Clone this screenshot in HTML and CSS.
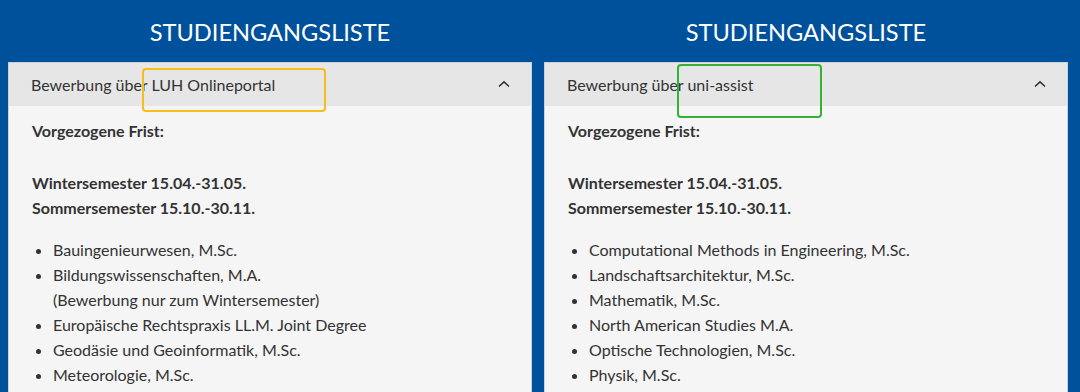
FILE: index.html
```html
<!DOCTYPE html>
<html lang="de">
  <head>
    <meta charset="UTF-8" />
    <title>Studiengangsliste</title>
    <link rel="stylesheet" href="styles.css">
  </head>
  <body>
    <div class="page">
      <div class="column">
        <h2 class="title">STUDIENGANGSLISTE</h2>
        <div class="card">
          <div class="card-head">
            <span class="head-text">Bewerbung über LUH Onlineportal</span>
            <svg class="chevron" width="12" height="8" viewBox="0 0 12 8"><path d="M1 6.5 L6 1.8 L11 6.5" fill="none" stroke="#333" stroke-width="1.6"/></svg>
            <div class="mark mark-yellow"></div>
          </div>
          <div class="card-body">
            <p class="bold">Vorgezogene Frist:</p>
            <p class="bold">Wintersemester 15.04.-31.05.<br>Sommersemester 15.10.-30.11.</p>
            <ul class="list">
              <li>Bauingenieurwesen, M.Sc.</li>
              <li>Bildungswissenschaften, M.A.<br>(Bewerbung nur zum Wintersemester)</li>
              <li>Europäische Rechtspraxis LL.M. Joint Degree</li>
              <li>Geodäsie und Geoinformatik, M.Sc.</li>
              <li>Meteorologie, M.Sc.</li>
            </ul>
          </div>
        </div>
      </div>
      <div class="column">
        <h2 class="title">STUDIENGANGSLISTE</h2>
        <div class="card">
          <div class="card-head">
            <span class="head-text">Bewerbung über uni-assist</span>
            <svg class="chevron" width="12" height="8" viewBox="0 0 12 8"><path d="M1 6.5 L6 1.8 L11 6.5" fill="none" stroke="#333" stroke-width="1.6"/></svg>
            <div class="mark mark-green"></div>
          </div>
          <div class="card-body">
            <p class="bold">Vorgezogene Frist:</p>
            <p class="bold">Wintersemester 15.04.-31.05.<br>Sommersemester 15.10.-30.11.</p>
            <ul class="list">
              <li>Computational Methods in Engineering, M.Sc.</li>
              <li>Landschaftsarchitektur, M.Sc.</li>
              <li>Mathematik, M.Sc.</li>
              <li>North American Studies M.A.</li>
              <li>Optische Technologien, M.Sc.</li>
              <li>Physik, M.Sc.</li>
            </ul>
          </div>
        </div>
      </div>
    </div>
  </body>
</html>
```

FILE: styles.css
```css
body {
  margin: 0;
  background: #00519c;
  font-family: Lato, "Open Sans", sans-serif;
  color: #333;
  overflow: hidden;
}

.page {
  display: flex;
  gap: 12px;
  padding: 0 12px 0 8px;
  height: 392px;
}

.column {
  width: 524px;
  display: flex;
  flex-direction: column;
}

.title {
  margin: 0;
  height: 62px;
  line-height: 64px;
  text-align: center;
  color: #fff;
  font-size: 23.6px;
  font-weight: 400;
}

.card {
  flex: 1;
  background: #f5f5f5;
  border: 1px solid #c9d3de;
  border-bottom: none;
}

.card-head {
  position: relative;
  height: 43px;
  background: #e6e6e6;
  display: flex;
  align-items: center;
  justify-content: space-between;
  padding: 0 21px 0 22px;
  font-size: 16px;
}

.chevron {
  margin-top: -2px;
}

.mark {
  position: absolute;
  border-radius: 4px;
}

.mark-yellow {
  left: 133px;
  top: 5px;
  width: 180px;
  height: 40px;
  border: 2px solid #f7be1a;
}

.mark-green {
  left: 132px;
  top: 1px;
  width: 141px;
  height: 50px;
  border: 2px solid #34b233;
}

.card-body {
  padding: 12px 23px 0 23px;
  font-size: 16px;
  line-height: 25px;
}

.card-body p {
  margin: 0 0 27px 0;
}

.bold {
  font-weight: 700;
}

.card-body p + p {
  margin-bottom: 17px;
}

.list {
  margin: 0;
  padding-left: 21px;
}
```
